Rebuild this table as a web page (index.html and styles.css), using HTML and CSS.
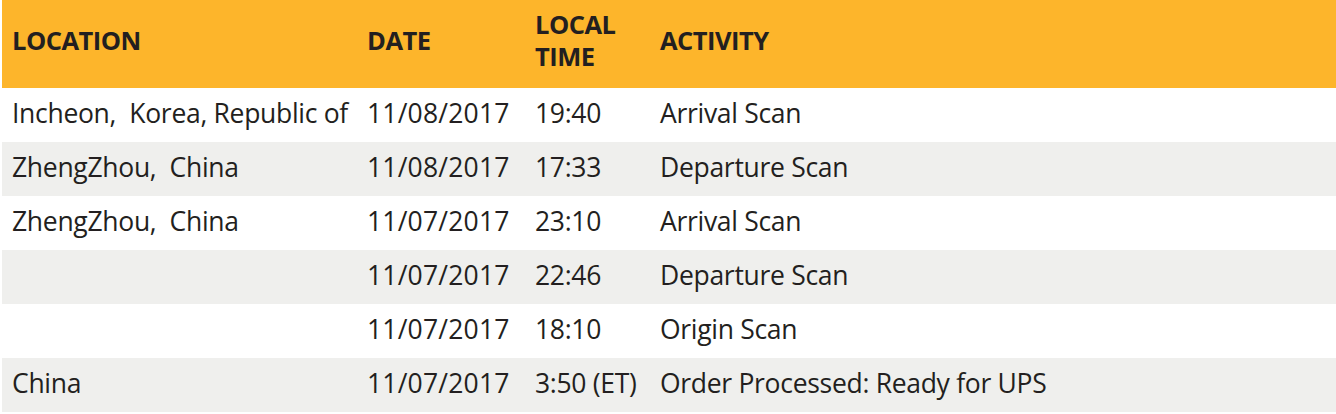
FILE: index.html
```html
<!DOCTYPE html>
<html lang="en">
<head>
<meta charset="utf-8">
<title>Shipment Progress</title>
<link rel="stylesheet" href="styles.css">
</head>
<body>
<table class="progress">
  <colgroup>
    <col class="c-loc">
    <col class="c-date">
    <col class="c-time">
    <col class="c-act">
  </colgroup>
  <thead>
    <tr>
      <th>LOCATION</th>
      <th>DATE</th>
      <th>LOCAL<br>TIME</th>
      <th>ACTIVITY</th>
    </tr>
  </thead>
  <tbody>
    <tr><td>Incheon,&nbsp; Korea, Republic of</td><td>11/08/2017</td><td>19:40</td><td>Arrival Scan</td></tr>
    <tr><td>ZhengZhou,&nbsp; China</td><td>11/08/2017</td><td>17:33</td><td>Departure Scan</td></tr>
    <tr><td>ZhengZhou,&nbsp; China</td><td>11/07/2017</td><td>23:10</td><td>Arrival Scan</td></tr>
    <tr><td></td><td>11/07/2017</td><td>22:46</td><td>Departure Scan</td></tr>
    <tr><td></td><td>11/07/2017</td><td>18:10</td><td>Origin Scan</td></tr>
    <tr><td>China</td><td>11/07/2017</td><td>3:50 (ET)</td><td>Order Processed: Ready for UPS</td></tr>
  </tbody>
</table>
</body>
</html>
```
FILE: styles.css
```css
html, body {
  margin: 0;
  padding: 0;
  background: #ffffff;
}
body {
  padding-left: 2px;
  font-family: "Open Sans", "Noto Sans", sans-serif;
  color: #231f20;
}
.progress {
  border-collapse: collapse;
  width: 1334px;
  table-layout: fixed;
}
.c-loc { width: 355px; }
.c-date { width: 168px; }
.c-time { width: 125px; }
.progress th {
  background: #fdb52b;
  height: 79px;
  padding: 0 10px 9px;
  text-align: left;
  font-weight: 700;
  font-size: 25.5px;
  line-height: 32px;
  letter-spacing: -0.5px;
  vertical-align: middle;
}
.progress td {
  height: 50px;
  padding: 0 10px 4px;
  font-size: 26.5px;
  letter-spacing: -0.3px;
  white-space: nowrap;
  vertical-align: middle;
}
.progress td:nth-child(2) {
  letter-spacing: 0.2px;
}
.progress tbody tr:nth-child(even) td {
  background: #efefed;
}
```
